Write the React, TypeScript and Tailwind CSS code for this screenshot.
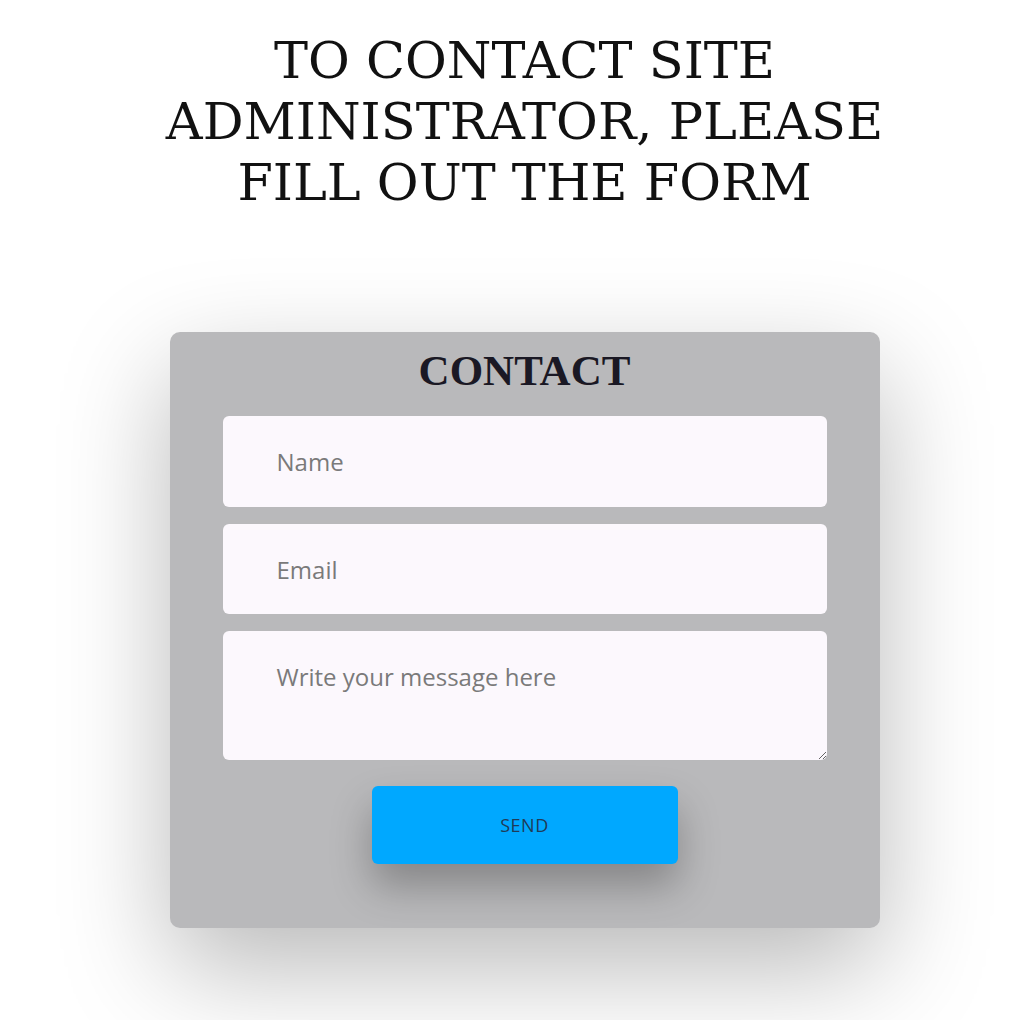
export default function App() {
  return (
    <div className="min-h-[1020px] w-full bg-white flex flex-col items-center overflow-hidden pl-[16px]">
      <h1
        className="mt-[30px] max-w-[760px] text-center text-[51px] leading-[61px] text-[#111] font-normal"
        style={{ fontFamily: '"DejaVu Serif", serif' }}
      >
        TO CONTACT SITE ADMINISTRATOR, PLEASE FILL OUT THE FORM
      </h1>

      <div className="mt-[119px] w-[710px] rounded-[10px] bg-[#b9b9bb] px-[53px] pt-[17px] pb-[64px] shadow-[0_40px_110px_rgba(0,0,0,0.28)] flex flex-col items-stretch">
        <h2
          className="text-center text-[43px] leading-none font-bold text-[#1a1824]"
          style={{ fontFamily: '"Liberation Serif", serif' }}
        >
          CONTACT
        </h2>
        <form
          className="mt-[24px] flex flex-col gap-[17px]"
          style={{ fontFamily: '"Open Sans", sans-serif' }}
          onSubmit={(e) => e.preventDefault()}
        >
          <input
            type="text"
            placeholder="Name"
            className="h-[91px] w-full rounded-[6px] bg-[#fcf8fd] pl-[54px] pr-4 text-[24px] text-[#333] placeholder:text-[#7a7a7a] outline-none"
          />
          <input
            type="email"
            placeholder="Email"
            className="h-[90px] w-full rounded-[6px] bg-[#fcf8fd] pl-[54px] pr-4 text-[24px] text-[#333] placeholder:text-[#7a7a7a] outline-none"
          />
          <textarea
            placeholder="Write your message here"
            className="h-[129px] w-full rounded-[6px] bg-[#fcf8fd] pl-[54px] pr-4 pt-[28px] text-[24px] text-[#333] placeholder:text-[#7a7a7a] outline-none"
          />
          <div className="mt-[9px] flex justify-center">
            <button
              type="submit"
              className="h-[78px] w-[306px] rounded-[6px] bg-[#00a8ff] text-[18px] tracking-[0.5px] text-[#1f3b57] shadow-[0_22px_40px_rgba(0,0,0,0.28)]"
            >
              SEND
            </button>
          </div>
        </form>
      </div>
    </div>
  );
}
